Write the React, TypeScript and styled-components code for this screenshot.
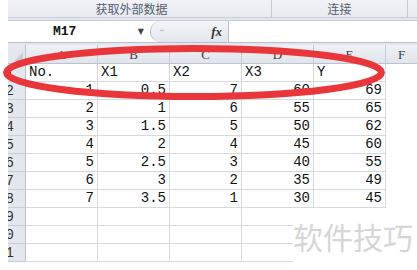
import React from "react";
import styled, { createGlobalStyle } from "styled-components";

const Global = createGlobalStyle`
  html, body { margin: 0; padding: 0; background: #ffffff; }
  #root { width: 417px; height: 270px; }
`;

const Page = styled.div`
  position: relative;
  width: 417px;
  height: 270px;
  overflow: hidden;
  background: #fff;
  font-family: "Liberation Mono", "DejaVu Sans Mono", monospace;
`;

const Ribbon = styled.div`
  margin-left: 8px;
  height: 18px;
  display: grid;
  grid-template-columns: 264px 136px 1fr;
  background: linear-gradient(#f1f3f6, #e7ebf0);
  border-bottom: 1px solid #c9cfd8;
  box-sizing: border-box;
`;

const Group = styled.div<{ $shift?: number }>`
  display: flex;
  align-items: center;
  justify-content: center;
  padding-right: ${(p) => p.$shift ?? 0}px;
  border-right: 1px solid #c3cad4;
  font-family: "Noto Sans CJK SC", "Noto Sans", sans-serif;
  font-size: 12px;
  color: #56606e;
  line-height: 1;
`;

const FormulaBar = styled.div`
  margin-left: 8px;
  height: 27px;
  padding: 2px 0 2px;
  box-sizing: border-box;
  background: #e3e7ed;
  display: flex;
`;

const FormulaInner = styled.div`
  flex: 1;
  display: flex;
  background: #fff;
  border-top: 1px solid #c7cdd6;
  border-bottom: 1px solid #b9c0cb;
`;

const NameBox = styled.div`
  width: 142px;
  display: flex;
  align-items: center;
  padding-left: 45px;
  box-sizing: border-box;
  font-size: 13px;
  font-weight: bold;
  color: #111;
  position: relative;
`;

const NameArrow = styled.span`
  margin-left: auto;
  margin-right: 6px;
  font-size: 8px;
  color: #444;
  font-family: "DejaVu Sans", sans-serif;
`;

const FxArea = styled.div`
  width: 79px;
  display: flex;
  align-items: center;
  background: linear-gradient(#f4f6f9, #e2e6ec);
  border-left: 1px solid #b9c0cb;
  border-radius: 10px 0 0 10px;
  border-right: 1px solid #b9c0cb;
  box-sizing: border-box;
`;

const CancelBtn = styled.div`
  width: 14px;
  height: 14px;
  margin-left: 5px;
  display: flex;
  align-items: center;
  justify-content: center;
`;

const Fx = styled.span`
  margin-left: auto;
  margin-right: 6px;
  font-family: "Liberation Serif", serif;
  font-style: italic;
  font-weight: bold;
  font-size: 13px;
  color: #333;
`;

const FormulaInput = styled.div`
  flex: 1;
  background: #fff;
`;

const Sheet = styled.div`
  margin-left: 8px;
  display: grid;
  grid-template-columns: 18px repeat(5, 72px) 1fr;
  grid-template-rows: 19px repeat(11, 18px);
`;

const Corner = styled.div`
  position: relative;
  background: #e4e8ee;
  border-right: 1px solid #bcc3cd;
  border-bottom: 1px solid #bcc3cd;
  box-sizing: border-box;
  &::after {
    content: "";
    position: absolute;
    right: 2px;
    bottom: 2px;
    width: 0;
    height: 0;
    border-left: 9px solid transparent;
    border-bottom: 9px solid #c9ced6;
  }
`;

const ColHead = styled.div<{ $last?: boolean }>`
  background: linear-gradient(#eef1f5, #e1e5eb);
  border-right: ${(p) => (p.$last ? "none" : "1px solid #c5cbd4")};
  border-bottom: 1px solid #bcc3cd;
  box-sizing: border-box;
  display: flex;
  align-items: center;
  justify-content: center;
  font-family: "Liberation Serif", serif;
  font-size: 13px;
  color: #3c3c3c;
  padding-top: 2px;
`;

const RowHead = styled.div`
  background: #e4e8ee;
  border-right: 1px solid #bcc3cd;
  border-bottom: 1px solid #c8ced7;
  box-sizing: border-box;
  overflow: hidden;
  display: flex;
  justify-content: flex-end;
  align-items: center;
  padding-right: 11px;
  padding-top: 1px;
  font-size: 14px;
  color: #333;
  white-space: nowrap;
`;

const Cell = styled.div<{ $num?: boolean; $bare?: boolean }>`
  border-right: ${(p) => (p.$bare ? "none" : "1px solid #d5d9df")};
  border-bottom: ${(p) => (p.$bare ? "none" : "1px solid #d5d9df")};
  box-sizing: border-box;
  display: flex;
  align-items: flex-end;
  justify-content: ${(p) => (p.$num ? "flex-end" : "flex-start")};
  padding: 0 3px 1px 3px;
  font-size: 14px;
  line-height: 16px;
  color: #111;
  white-space: nowrap;
`;

const Watermark = styled.div`
  position: absolute;
  left: 293px;
  top: 208px;
  width: 124px;
  height: 62px;
  background: #fff;
  display: flex;
  align-items: flex-start;
  padding-top: 10px;
  box-sizing: border-box;
  font-family: "Noto Sans CJK SC", "Noto Sans", sans-serif;
  font-size: 30px;
  line-height: 36px;
  letter-spacing: 0px;
  color: #d6d6d6;
  white-space: nowrap;
`;

const BottomBand = styled.div`
  height: 8px;
  background: #fdfdfb;
`;

const Marker = styled.svg`
  position: absolute;
  left: 0;
  top: 0;
  pointer-events: none;
`;

const cols = ["A", "B", "C", "D", "E", "F"];
const header = ["No.", "X1", "X2", "X3", "Y"];
const data: (string | number)[][] = [
  [1, 0.5, 7, 60, 69],
  [2, 1, 6, 55, 65],
  [3, 1.5, 5, 50, 62],
  [4, 2, 4, 45, 60],
  [5, 2.5, 3, 40, 55],
  [6, 3, 2, 35, 49],
  [7, 3.5, 1, 30, 45],
];

export default function App() {
  const rows: React.ReactNode[] = [];
  for (let r = 1; r <= 11; r++) {
    rows.push(<RowHead key={`rh${r}`}>{r}</RowHead>);
    for (let c = 0; c < 5; c++) {
      let content: React.ReactNode = "";
      let num = false;
      if (r === 1) content = header[c];
      else if (r - 2 < data.length) {
        content = String(data[r - 2][c]);
        num = true;
      }
      rows.push(
        <Cell key={`c${r}-${c}`} $num={num}>
          {content}
        </Cell>
      );
    }
    rows.push(<Cell key={`f${r}`} $bare />);
  }

  return (
    <>
      <Global />
      <Page>
        <Ribbon>
          <Group $shift={16}>获取外部数据</Group>
          <Group>连接</Group>
          <div />
        </Ribbon>
        <FormulaBar>
          <FormulaInner>
            <NameBox>
              M17
              <NameArrow>▼</NameArrow>
            </NameBox>
            <FxArea>
              <CancelBtn>
                <svg width="12" height="12" viewBox="0 0 12 12">
                  <path d="M3 4.5 H7" stroke="#c4c9d0" strokeWidth="1.5" fill="none" />
                </svg>
              </CancelBtn>
              <Fx>fx</Fx>
            </FxArea>
            <FormulaInput />
          </FormulaInner>
        </FormulaBar>
        <Sheet>
          <Corner />
          {cols.map((c, i) => (
            <ColHead key={c} $last={i === 5}>
              {c}
            </ColHead>
          ))}
          {rows}
        </Sheet>
        <BottomBand />
        <Watermark>软件技巧</Watermark>
        <Marker width="417" height="270" viewBox="0 0 417 270">
          <ellipse
            cx="194"
            cy="72.5"
            rx="187.5"
            ry="24"
            fill="none"
            stroke="#e8363b"
            strokeWidth="7"
          />
        </Marker>
      </Page>
    </>
  );
}
